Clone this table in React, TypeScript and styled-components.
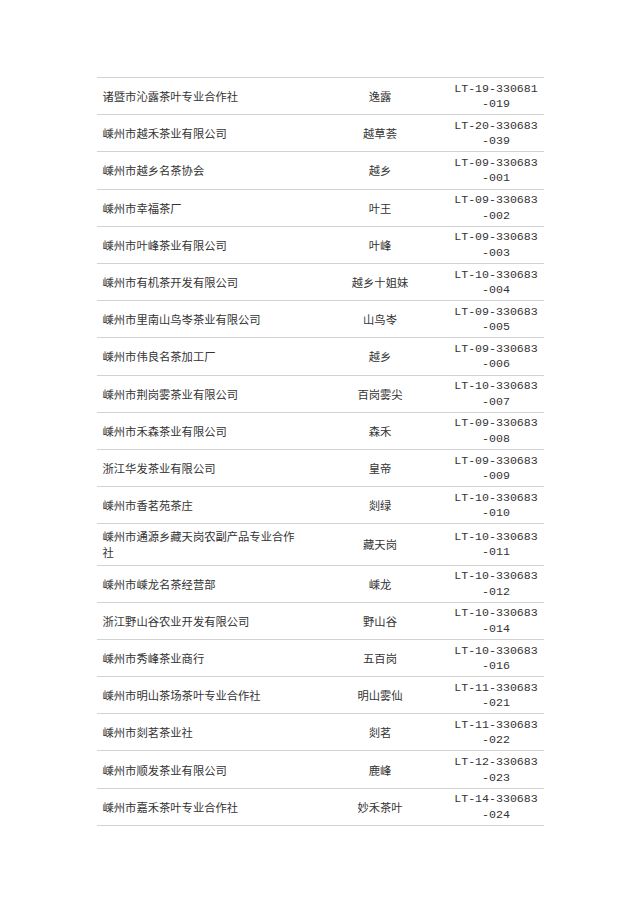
import React from "react";
import styled, { createGlobalStyle } from "styled-components";

const GlobalStyle = createGlobalStyle`
  html, body { margin: 0; padding: 0; background: #ffffff; }
  body { font-family: "Noto Sans CJK SC", "Noto Sans", sans-serif; color: #333333; }
`;

const Page = styled.div`
  width: 641px;
  min-height: 907px;
  padding-top: 77px;
  box-sizing: border-box;
`;

const Table = styled.div`
  margin-left: 97px;
  width: 447px;
  border-top: 1px solid #d2d2d2;
`;

const Row = styled.div`
  display: grid;
  grid-template-columns: 215px 136px 96px;
  align-items: center;
  min-height: 36.2px;
  border-bottom: 1px solid #d2d2d2;
`;

const NameCell = styled.div`
  padding: 4.15px 12px 4.15px 5.5px;
  font-size: 11.3px;
  line-height: 16px;
  color: #333333;
`;

const BrandCell = styled.div`
  text-align: center;
  font-size: 11.3px;
  line-height: 16px;
  color: #333333;
`;

const CodeCell = styled.div`
  text-align: center;
  font-family: "Liberation Mono", "DejaVu Sans Mono", monospace;
  font-size: 11.6px;
  line-height: 15.4px;
  color: #333333;
`;

const CodeLine = styled.span`
  display: block;
  white-space: nowrap;
`;

type Entry = { name: string; brand: string; code: string; suffix: string };

const rows: Entry[] = [
  { name: "诸暨市沁露茶叶专业合作社", brand: "逸露", code: "LT-19-330681", suffix: "-019" },
  { name: "嵊州市越禾茶业有限公司", brand: "越草荟", code: "LT-20-330683", suffix: "-039" },
  { name: "嵊州市越乡名茶协会", brand: "越乡", code: "LT-09-330683", suffix: "-001" },
  { name: "嵊州市幸福茶厂", brand: "叶王", code: "LT-09-330683", suffix: "-002" },
  { name: "嵊州市叶峰茶业有限公司", brand: "叶峰", code: "LT-09-330683", suffix: "-003" },
  { name: "嵊州市有机茶开发有限公司", brand: "越乡十姐妹", code: "LT-10-330683", suffix: "-004" },
  { name: "嵊州市里南山鸟岺茶业有限公司", brand: "山鸟岺", code: "LT-09-330683", suffix: "-005" },
  { name: "嵊州市伟良名茶加工厂", brand: "越乡", code: "LT-09-330683", suffix: "-006" },
  { name: "嵊州市荆岗雾茶业有限公司", brand: "百岗雾尖", code: "LT-10-330683", suffix: "-007" },
  { name: "嵊州市禾森茶业有限公司", brand: "森禾", code: "LT-09-330683", suffix: "-008" },
  { name: "浙江华发茶业有限公司", brand: "皇帝", code: "LT-09-330683", suffix: "-009" },
  { name: "嵊州市香茗苑茶庄", brand: "剡绿", code: "LT-10-330683", suffix: "-010" },
  { name: "嵊州市通源乡藏天岗农副产品专业合作社", brand: "藏天岗", code: "LT-10-330683", suffix: "-011" },
  { name: "嵊州市嵊龙名茶经营部", brand: "嵊龙", code: "LT-10-330683", suffix: "-012" },
  { name: "浙江野山谷农业开发有限公司", brand: "野山谷", code: "LT-10-330683", suffix: "-014" },
  { name: "嵊州市秀峰茶业商行", brand: "五百岗", code: "LT-10-330683", suffix: "-016" },
  { name: "嵊州市明山茶场茶叶专业合作社", brand: "明山雾仙", code: "LT-11-330683", suffix: "-021" },
  { name: "嵊州市剡茗茶业社", brand: "剡茗", code: "LT-11-330683", suffix: "-022" },
  { name: "嵊州市顺发茶业有限公司", brand: "鹿峰", code: "LT-12-330683", suffix: "-023" },
  { name: "嵊州市嘉禾茶叶专业合作社", brand: "妙禾茶叶", code: "LT-14-330683", suffix: "-024" },
];

export default function App() {
  return (
    <>
      <GlobalStyle />
      <Page>
        <Table>
          {rows.map((r, i) => (
            <Row key={i}>
              <NameCell>{r.name}</NameCell>
              <BrandCell>{r.brand}</BrandCell>
              <CodeCell>
                <CodeLine>{r.code}</CodeLine>
                <CodeLine>{r.suffix}</CodeLine>
              </CodeCell>
            </Row>
          ))}
        </Table>
      </Page>
    </>
  );
}
